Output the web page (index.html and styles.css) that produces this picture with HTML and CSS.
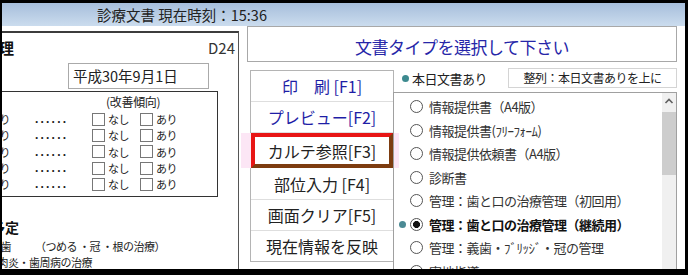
FILE: index.html
```html
<!DOCTYPE html>
<html lang="ja">
<head>
    <meta charset="UTF-8">
    <title>診療文書</title>
    <link rel="stylesheet" href="styles.css">
</head>
<body>
<div class="window">
    <div class="titlebar">診療文書 現在時刻：15:36</div>
    <div class="main">
        <div class="left-pane">
            <div class="sheet">
                <div class="sheet-head">
                    <span class="sheet-title">歯と口の治療管理</span>
                    <span class="code">D24</span>
                </div>
                <div class="date-row"><div class="date-box">平成30年9月1日</div></div>
                <div class="eval-box">
                    <div class="eval-head">(改善傾向)</div>
                    <div class="eval-rows">
                        <div class="eval-row"><span class="lbl">あり</span><span class="dots">......</span><span class="chk"><i class="cb"></i>なし</span><span class="chk"><i class="cb"></i>あり</span></div>
                        <div class="eval-row"><span class="lbl">あり</span><span class="dots">......</span><span class="chk"><i class="cb"></i>なし</span><span class="chk"><i class="cb"></i>あり</span></div>
                        <div class="eval-row"><span class="lbl">あり</span><span class="dots">......</span><span class="chk"><i class="cb"></i>なし</span><span class="chk"><i class="cb"></i>あり</span></div>
                        <div class="eval-row"><span class="lbl">あり</span><span class="dots">......</span><span class="chk"><i class="cb"></i>なし</span><span class="chk"><i class="cb"></i>あり</span></div>
                        <div class="eval-row"><span class="lbl">あり</span><span class="dots">......</span><span class="chk"><i class="cb"></i>なし</span><span class="chk"><i class="cb"></i>あり</span></div>
                    </div>
                </div>
                <div class="plan-title">治療予定</div>
                <div class="plan-line first"><span class="plan-item">□むし歯</span><span class="plan-note">（つめる ・冠 ・根の治療）</span></div>
                <div class="plan-line second">歯肉炎・歯周病の治療</div>
            </div>
        </div>

        <div class="right-pane">
            <div class="doc-header">文書タイプを選択して下さい</div>
            <div class="lower">
                <div class="btn-panel">
                    <div class="btn blue">印　刷 [F1]</div>
                    <div class="btn blue">プレビュー[F2]</div>
                    <div class="btn focus">カルテ参照[F3]</div>
                    <div class="btn">部位入力 [F4]</div>
                    <div class="btn">画面クリア[F5]</div>
                    <div class="btn">現在情報を反映</div>
                </div>
                <div class="list-col">
                    <div class="list-top">
                        <span class="today"><i class="dot"></i>本日文書あり</span>
                        <div class="sort-box">整列：本日文書ありを上に</div>
                    </div>
                    <div class="list-box">
                        <div class="items">
                            <div class="item"><i class="mark"></i><i class="radio"></i>情報提供書（A4版）</div>
                            <div class="item"><i class="mark"></i><i class="radio"></i>情報提供書(ﾌﾘｰﾌｫｰﾑ)</div>
                            <div class="item"><i class="mark"></i><i class="radio"></i>情報提供依頼書（A4版）</div>
                            <div class="item"><i class="mark"></i><i class="radio"></i>診断書</div>
                            <div class="item"><i class="mark"></i><i class="radio"></i>管理：歯と口の治療管理（初回用）</div>
                            <div class="item sel"><i class="mark on"></i><i class="radio checked"></i>管理：歯と口の治療管理（継続用）</div>
                            <div class="item"><i class="mark"></i><i class="radio"></i>管理：義歯・ﾌﾞﾘｯｼﾞ・冠の管理</div>
                            <div class="item"><i class="mark"></i><i class="radio"></i>実地指導</div>
                        </div>
                        <div class="scrollbar">
                            <svg class="arrow" width="14" height="16" viewBox="0 0 14 16"><path d="M3.5 10 L7 6.5 L10.5 10" fill="none" stroke="#606060" stroke-width="1.6"/></svg>
                            <div class="thumb"></div>
                        </div>
                    </div>
                </div>
            </div>
        </div>
    </div>
</div>
</body>
</html>
```

FILE: styles.css
```css
* { box-sizing: border-box; }
body { margin: 0; background: #000; font-family: "Noto Sans CJK JP", sans-serif; color: #222; }
i { font-style: normal; display: inline-block; }

.window { width: 683px; height: 266px; margin: 3px 0 0 2px; background: #fff; overflow: hidden; display: flex; flex-direction: column; }
.titlebar { height: 23px; flex: none; background: linear-gradient(#a6bedb, #cbdcee); font-size: 14.5px; line-height: 23px; padding-left: 95px; color: #222; }
.main { flex: 1; display: flex; min-height: 0; }

/* left: document preview, cut off on the left */
.left-pane { width: 237px; flex: none; margin-top: 5px; border-top: 2px solid #3c3c3c; border-right: 1px solid #555; display: flex; justify-content: flex-end; overflow: hidden; }
.sheet { width: 400px; flex: none; }
.sheet-head { display: flex; justify-content: space-between; align-items: center; height: 19px; margin-top: 5px; padding: 0 3px 0 56px; }
.sheet-title { font-size: 15px; font-weight: bold; color: #111; }
.code { font-size: 15px; color: #333; }
.date-row { display: flex; justify-content: flex-end; padding-right: 29px; margin-top: 6px; }
.date-box { width: 141px; height: 26px; border: 1px solid #aaa; font-size: 14.5px; line-height: 24px; padding-left: 4px; }

.eval-box { margin: 2px 20px 0 10px; height: 106px; border: 1px solid #333; }
.eval-head { font-size: 12px; line-height: 14px; padding: 3px 0 0 257px; letter-spacing: -0.3px; }
.eval-rows { padding-top: 2px; }
.eval-row { display: grid; grid-template-columns: 165px 78px 48px auto; height: 16.3px; line-height: 16px; align-items: center; font-size: 11px; letter-spacing: -0.5px; }
.lbl { text-align: right; padding-right: 4px; }
.dots { font-family: "Liberation Sans", sans-serif; font-weight: bold; font-size: 12px; letter-spacing: 2.2px; padding-left: 21px; line-height: 10px; }
.chk { display: flex; align-items: center; }
.cb { width: 13px; height: 13px; border: 1px solid #777; margin-right: 3px; background: #fff; }

.plan-title { margin-top: 22px; font-size: 14px; font-weight: bold; line-height: 16px; padding-left: 125px; color: #111; }
.plan-line { font-size: 11px; line-height: 16px; letter-spacing: -0.5px; }
.plan-line.first { margin-top: 3px; padding-left: 131px; display: flex; }
.plan-note { margin-left: 24px; }
.plan-line.second { padding-left: 149px; }

/* right: document type selection */
.right-pane { flex: 1; display: flex; flex-direction: column; }
.doc-header { margin: 0 8px; height: 36px; border: 1px solid #a8a8a8; text-align: center; font-size: 17px; letter-spacing: -0.5px; color: #2626a8; line-height: 24px; padding-top: 8px; }
.lower { flex: 1; display: flex; margin-top: 6px; min-height: 0; }

.btn-panel { margin: 2px 0 0 11px; width: 144px; height: 192px; border: 1px solid #b4b4b4; display: flex; flex-direction: column; flex: none; }
.btn { flex: 1; border-bottom: 1px solid #dedede; display: flex; align-items: center; justify-content: center; font-size: 16px; color: #222; }
.btn:last-child { border-bottom: none; }
.btn.blue { color: #1e1ea6; }
.btn.focus { flex: none; height: 35px; border: 4px solid; border-color: #e81515 #7d3c10 #7d3c10 #e81515; box-shadow: -10px 0 0 #fce6f5, 6px 0 0 #fce6f5; }

.list-col { flex: 1; margin-right: 8px; display: flex; flex-direction: column; min-width: 0; }
.list-top { height: 20px; display: flex; align-items: center; flex: none; }
.today { display: flex; align-items: center; font-size: 13px; padding-left: 8px; letter-spacing: -0.5px; }
.dot { width: 7px; height: 7px; border-radius: 50%; background: #3d8a8f; margin-right: 3px; }
.sort-box { margin-left: auto; width: 169px; height: 20px; border: 1px solid #d4d4d4; font-size: 12px; letter-spacing: -0.5px; text-align: center; line-height: 18px; }

.list-box { margin: 4px 0 0 -1px; height: 200px; border: 1px solid #a0a0a0; display: flex; flex: none; }
.items { flex: 1; padding-top: 2px; }
.item { height: 23.5px; display: flex; align-items: center; font-size: 13px; letter-spacing: -0.5px; color: #333; }
.item.sel { font-weight: bold; color: #111; }
.mark { width: 7px; height: 7px; border-radius: 50%; margin: 0 4px 0 5px; }
.mark.on { background: #4b8a94; }
.radio { width: 13px; height: 13px; border: 1px solid #555; border-radius: 50%; margin-right: 6px; background: #fff; }
.radio.checked { background: radial-gradient(circle, #111 3.2px, #fff 3.8px); }
.scrollbar { width: 14px; background: #f0f0f0; flex: none; }
.arrow { display: block; }
.thumb { margin-top: 3px; height: 63px; background: #cdcdcd; }
```
